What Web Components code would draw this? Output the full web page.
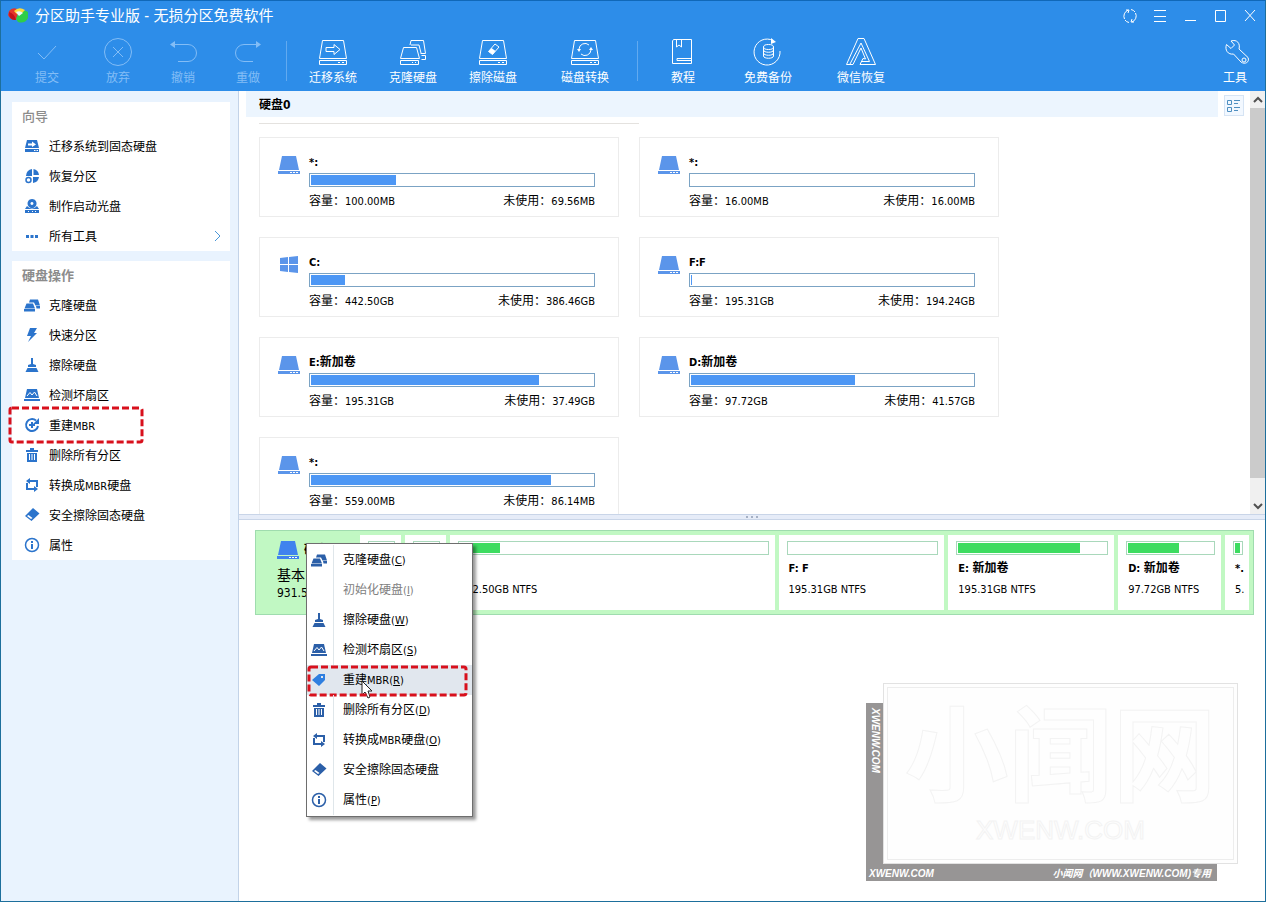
<!DOCTYPE html>
<html lang="zh-CN">
<head>
<meta charset="utf-8">
<title>分区助手专业版</title>
<style>
  html, body { margin: 0; height: 100%; }
  body { font: 12px/16px "DejaVu Sans Condensed", "Noto Sans CJK SC", sans-serif; color: #000; background: #fff; }
</style>
</head>
<body>
<partition-app></partition-app>
<script>
const define = (name, css, html, setup) => {
  const tpl = document.createElement('template');
  tpl.innerHTML = `<style>*{box-sizing:border-box} button{font:inherit;color:inherit;background:none;border:0;padding:0;margin:0;cursor:default}${css}</style>${html}`;
  customElements.define(name, class extends HTMLElement {
    connectedCallback() {
      if (this.shadowRoot) return;
      const root = this.attachShadow({ mode: 'open' });
      root.append(tpl.content.cloneNode(true));
      if (setup) setup.call(this, root);
    }
  });
};

/* Latin runs are set one size smaller than the Chinese text around them. */
const fill = (el, text) => {
  el.textContent = '';
  for (const part of text.split(/([ -~]+|：)/)) {
    if (!part) continue;
    if (/^([ -~]+|：)$/.test(part)) {
      const s = document.createElement('span');
      s.className = part === '：' ? 'colon' : 'latin';
      const m = part.match(/^(.*\()([A-Z])(\))$/);
      if (m) { const u = document.createElement('u'); u.textContent = m[2]; s.append(m[1], u, m[3]); }
      else s.textContent = part;
      el.append(s);
    } else el.append(part);
  }
};
const LATIN = '.latin{font-size:11px} .colon{font-family:"Noto Sans CJK TC",sans-serif}';

const line = 'fill="none" stroke="currentColor"';
const tray = '<path d="M5.5 4.5H26.5L29.5 22.5H2.5ZM2.5 24.5H29.5V28.5H2.5ZM21 26.5h2M25 26.5h2"/>';
const icons = {
  check: [32, `<path ${line} d="M7 17L13 23L25 10"/>`],
  cancel: [32, `<g ${line}><circle cx="16" cy="16" r="13.5"/><path d="M11 11L21 21M21 11L11 21"/></g>`],
  undo: [32, `<path ${line} d="M6 8.5H21a8.5 8.5 0 0 1 0 17H11"/><path fill="currentColor" d="M3 8.5L8 5v7z"/>`],
  redo: [32, `<path ${line} d="M26 8.5H12a8.5 8.5 0 0 0 0 17H21"/><path fill="currentColor" d="M29 8.5L24 5v7z"/>`],
  migrate: [32, `<g ${line}>${tray}<path d="M9 11.5H17V8.5L23 13.5L17 18.5V15.5H9Z"/></g>`],
  clone: [32, `<g ${line}><path d="M6.5 11.5H19.5L22.5 22.5H3.5ZM3.5 24.5H21.5V28.5H3.5ZM15 26.5h1M18 26.5h1M13 9L14 4.5H26.5L28.5 17.5H23.5M24.5 19.5H28.5V23.5H24.5M24 17L22 9H14"/></g>`],
  erase: [32, `<g ${line}>${tray}<path d="M11.5 15.5L18 8L22 11L15.5 18.5Z"/></g><path fill="currentColor" d="M11.5 15.5l3-3.5 4 3-3 3.5z"/>`],
  convert: [32, `<g ${line}>${tray}<path d="M10 13a6 6 0 0 1 10-4M22 14a6 6 0 0 1-10 4"/></g><path fill="currentColor" d="M8 13h4l-2 3zM20 14h4l-2-3z"/>`],
  book: [32, `<g ${line}><path d="M6.5 3.5H24.5V27.5H5.5V5ZM9.5 3.5V11L12 9L14.5 11V3.5M24 22.500H10V24.5H24"/></g>`],
  backup: [32, `<g ${line}><path d="M21 4.5A13 13 0 1 0 28 15"/><ellipse cx="16.5" cy="11" rx="5" ry="2.5"/><path d="M11.5 11V20c0 3 10 3 10 0V11M11.5 14c0 3 10 3 10 0M11.5 17c0 3 10 3 10 0"/></g><path fill="currentColor" d="M19 2l5 4-5 2z"/>`],
  recover: [32, `<g ${line}><path d="M13 2.5H19L30.5 28.5H15L18 22.5L20.5 23L16 12L8 28.5H1.5Z"/><path d="M16 7L24.5 25.5H17M16 7L5 28"/></g>`],
  wrench: [32, `<g ${line}><path d="M7.5 8.5L12 12.5L15.5 9L12 5C18 3 21.5 7.5 20 13L29 21.5C31 26 26 29 22 26L14.5 18C9 19 5.5 14 7.5 8.5Z"/><circle cx="25" cy="24" r="2"/></g>`],
  refresh: [18, `<g ${line}><path d="M3.5 12A6.5 6.5 0 0 1 7 3.2M14.5 6a6.5 6.5 0 0 1-3.5 9M5 3l3 0-1 3M13 15h-3l1-3M10 2.5a6 6 0 0 1 4 2.5M4 13a6 6 0 0 0 4 2.5"/></g>`],
  lines: [18, `<path ${line} d="M3 3.5H15M3 9.5H15M3 14.5H15"/>`],
  min: [18, `<path ${line} d="M4 13.5H15"/>`],
  max: [18, `<path ${line} d="M4.5 3.5H14.5V14.5H4.5Z"/>`],
  close: [18, `<path ${line} d="M4 3L14 14M14 3L4 14"/>`],
  view: [16, `<g ${line}><path d="M1.5 2.5H5.5V6.5H1.5ZM1.5 9.5H5.5V13.5H1.5ZM8 2.5h6M8 5.5h4M8 9.5h6M8 12.5h4"/></g>`],
  chevron: [16, `<path ${line} d="M6 3L11 8L6 13"/>`],
  up: [14, `<path ${line} stroke-width="2" d="M3 9L7 5L11 9"/>`],
  down: [14, `<path ${line} stroke-width="2" d="M3 5L7 9L11 5"/>`],
  sMigrate: [16, `<path fill="currentColor" d="M3 2H13L15 10H1ZM1 11H15V14H1Z"/><path fill="#fff" d="M4 5.5H8V3.5L12 6.5L8 9V7.5H4ZM10 12h1.5v1H10zM12.5 12H14v1h-1.5z"/>`],
  sRecover: [16, `<path fill="currentColor" d="M8 1V8H2A7 7 0 0 1 8 1ZM9.5 1A7 7 0 0 1 15 7H9.5ZM9 9H15A7 7 0 0 1 9 15Z"/><circle cx="4.5" cy="12" r="2.5" fill="none" stroke="currentColor" stroke-width="1.5"/>`],
  sDisc: [16, `<path fill="currentColor" fill-rule="evenodd" d="M8 1a4.500 4.500 0 1 0 .1 0ZM8 4a1.500 1.500 0 1 1-.1 0ZM3 8L1 11H15L13 8Q8 13 3 8ZM1 12H15V15H1Z"/><path fill="#fff" d="M4 13h1v1H4zM8 13h1v1H8zM11 13h1v1h-1z"/>`],
  sDots: [16, `<path fill="currentColor" d="M2 7h3v3H2zM6.5 7h3v3h-3zM11 7h3v3h-3z"/>`],
  sClone: [16, `<path fill="currentColor" d="M2.5 6.5H9L11 11.5H.5ZM0 12H11V14.5H0ZM6 2.500H14L16 8.5H11.5L10 5.500H5ZM12 9H16V11.5H12.5Z"/>`],
  sBolt: [16, `<path fill="currentColor" d="M6 1H13L10 6H13L4 15L7 9H3Z"/>`],
  sBroom: [16, `<path fill="currentColor" d="M7 1H9V7L12 8V10H4V8L7 7ZM3.5 11H12.5L14.5 15H1.5Z"/>`],
  sScan: [16, `<path fill="currentColor" d="M3 2H13L15 11H1ZM0 12H16V14H0Z"/><path fill="none" stroke="#fff" d="M3 9L6 5.5L8 8L10.5 5L13 9"/>`],
  sRebuild: [16, `<path fill="none" stroke="currentColor" stroke-width="2" d="M12 3.5A6 6 0 1 0 14 9"/><path fill="currentColor" d="M15 1V7H9ZM7 5H9V7H11V9H9V11H7V9H5V7H7Z"/>`],
  sTrash: [16, `<path fill="currentColor" fill-rule="evenodd" d="M6 1H10V3H14V5H2V3H6ZM3 6H13V15H3ZM5 7V13H6V7ZM7.5 7V13H8.5V7ZM10 7V13H11V7Z"/>`],
  sSwap: [16, `<path fill="none" stroke="currentColor" stroke-width="2" d="M5 4H13V10M11 12H3V6"/><path fill="currentColor" d="M6 1V7L2 4ZM10 9V15L14 12Z"/>`],
  sEraser: [16, `<path fill="currentColor" fill-rule="evenodd" d="M9 1L15.5 6.5L7.5 14L1 9ZM4.500 8L3 9L7 12L8.500 11Z"/>`],
  sInfo: [16, `<circle cx="8" cy="8" r="6.5" fill="none" stroke="currentColor" stroke-width="1.5"/><path fill="currentColor" d="M7 4h2v2H7zM7 7h2v5H7z"/>`],
  sTag: [16, `<path fill="currentColor" fill-rule="evenodd" d="M1 8L8 2H14V8L8 14ZM10 4V6H12V4Z"/>`],
  disk: [22, `<path fill="currentColor" d="M4 2H18L21 16H1ZM0 17H22V20H0Z"/><path fill="#fff" d="M12 18h2v1h-2zM15 18h2v1h-2zM18 18h2v1h-2z"/>`],
  windows: [22, `<path fill="currentColor" d="M2 4L10 3V10H2ZM11 3L20 2V10H11ZM2 11H10V18L2 17ZM11 11H20V19L11 18Z"/>`],
  logo: [20, `<path fill="#e3342b" d="M1 5Q5 0 11 4L8 14Q2 14 0 9Z"/><path fill="#c1121c" d="M1 6Q7 8 8 14Q1 15 1 6Z"/><path fill="#2fce48" d="M10 8Q16 2 20 6V12Q17 18 10 16L8 13Z"/><path fill="#ffd93a" d="M6 5Q11 0 17 4L12 9Q9 9 6 5Z"/><path fill="#eaf6ff" d="M8 6Q12 4 15 7L11 10Z"/>`]
};
define('ui-icon', ':host{display:inline-flex;flex:none} svg{display:block}', '<svg aria-hidden="true"></svg>', function (root) {
  const [size, body] = icons[this.getAttribute('name')];
  const svg = root.querySelector('svg');
  svg.setAttribute('viewBox', `0 0 ${size} ${size}`);
  svg.setAttribute('width', size);
  svg.setAttribute('height', size);
  svg.innerHTML = body;
});

define('dash-frame', ':host{position:absolute;pointer-events:none} svg{display:block;width:100%;height:100%;overflow:visible}',
  '<svg><rect width="100%" height="100%" rx="2" fill="none" stroke="#d8101c" stroke-width="3" stroke-dasharray="7 3"/></svg>');

define('tool-button', `:host{display:block} button{display:flex;flex-direction:column;align-items:center;gap:2px;width:48px;height:54px;white-space:nowrap;color:#fff}
  :host([short]) button{width:32px} :host([off]) button{color:#83bdf6}`,
  '<button><span class="icon"></span><slot></slot></button>', function (root) {
    root.querySelector('.icon').outerHTML = `<ui-icon name="${this.getAttribute('icon')}"></ui-icon>`;
    root.querySelector('button').disabled = this.hasAttribute('off');
  });

define('app-header', `:host{display:block;background:#2d8de9;color:#fff;height:90px}
  .title{display:flex;align-items:center;height:30px;padding-left:7px;gap:7px;font-size:15px;line-height:20px}
  h1{font:inherit;margin:0;flex:1} .win{display:flex} .win button{width:30px;height:30px;display:grid;place-items:center}
  .tools{display:flex;padding:5px 14px 0 30px} .group{display:flex}
  .edit{gap:33px} .edit :first-child{margin-right:6px} .disk{gap:32px} .disk :last-child{margin-left:12px} .more{gap:45px}
  hr{width:1px;height:40px;border:0;background:#62aaf0;margin:5px 22px 0 22px} hr.b{margin:5px 29px 0 28px} .end{margin-left:auto}`,
  `<div class="title"><ui-icon name="logo"></ui-icon><h1>分区助手专业版 - 无损分区免费软件</h1>
   <div class="win"><button aria-label="刷新"><ui-icon name="refresh"></ui-icon></button><button aria-label="菜单"><ui-icon name="lines"></ui-icon></button><button aria-label="最小化"><ui-icon name="min"></ui-icon></button><button aria-label="最大化"><ui-icon name="max"></ui-icon></button><button aria-label="关闭"><ui-icon name="close"></ui-icon></button></div></div>
   <div class="tools">
    <div class="group edit"><tool-button short off icon="check">提交</tool-button><tool-button short off icon="cancel">放弃</tool-button><tool-button short off icon="undo">撤销</tool-button><tool-button short off icon="redo">重做</tool-button></div><hr>
    <div class="group disk"><tool-button icon="migrate">迁移系统</tool-button><tool-button icon="clone">克隆硬盘</tool-button><tool-button icon="erase">擦除磁盘</tool-button><tool-button icon="convert">磁盘转换</tool-button></div><hr class="b">
    <div class="group more"><tool-button short icon="book">教程</tool-button><tool-button icon="backup">免费备份</tool-button><tool-button icon="recover">微信恢复</tool-button></div>
    <tool-button class="end" short icon="wrench">工具</tool-button></div>`);

define('nav-item', `:host{display:block;position:relative} button{display:flex;align-items:center;gap:9px;width:100%;height:30px;padding:0 5px 0 12px;text-align:left}
  .icon{color:#2b74cc;display:flex} .label{flex:1;padding-top:2px} .more{color:#4a97d8;display:flex} dash-frame{left:-2px;right:88px;top:-2px;bottom:-2px} ${LATIN}`,
  '<button><span class="icon"></span><span class="label"></span></button>', function (root) {
    root.querySelector('.icon').innerHTML = `<ui-icon name="${this.getAttribute('icon')}"></ui-icon>`;
    fill(root.querySelector('.label'), this.getAttribute('label'));
    if (this.hasAttribute('more')) root.querySelector('button').insertAdjacentHTML('beforeend', '<span class="more"><ui-icon name="chevron"></ui-icon></span>');
    if (this.hasAttribute('marked')) root.append(document.createElement('dash-frame'));
  });
define('nav-card', ':host{display:block;background:#fff} h2{margin:0;height:29px;padding-left:10px;font-size:13px;line-height:30px;font-weight:700;color:#8c8c8c} :host([light]) h2{font-weight:500}',
  '<h2></h2><slot></slot>', function (root) { root.querySelector('h2').textContent = this.getAttribute('heading'); });
define('side-bar', ':host{display:flex;flex-direction:column;gap:10px;width:238px;flex:none;padding:11px 8px 10px 11px;background:#e9f3fe;border-right:1px solid #c3d3e8}',
  `<nav-card light heading="向导"><nav-item icon="sMigrate" label="迁移系统到固态硬盘"></nav-item><nav-item icon="sRecover" label="恢复分区"></nav-item><nav-item icon="sDisc" label="制作启动光盘"></nav-item><nav-item more icon="sDots" label="所有工具"></nav-item></nav-card>
   <nav-card heading="硬盘操作"><nav-item icon="sClone" label="克隆硬盘"></nav-item><nav-item icon="sBolt" label="快速分区"></nav-item><nav-item icon="sBroom" label="擦除硬盘"></nav-item><nav-item icon="sScan" label="检测坏扇区"></nav-item><nav-item marked icon="sRebuild" label="重建MBR"></nav-item><nav-item icon="sTrash" label="删除所有分区"></nav-item><nav-item icon="sSwap" label="转换成MBR硬盘"></nav-item><nav-item icon="sEraser" label="安全擦除固态硬盘"></nav-item><nav-item icon="sInfo" label="属性"></nav-item></nav-card>`);

define('usage-bar', `:host{display:block;height:14px;border:1px solid #7ba3c4;padding:1px} i{display:block;height:100%;background:#4d97f5;width:var(--used,0%)}
  :host([green]){border-color:#a9d8bb} :host([green]) i{background:#3ddc60}`, '<i></i>');

define('volume-card', `:host{display:flex;gap:9px;height:80px;border:1px solid #ececec;padding:16px 23px 0 18px}
  .icon{color:#5b95ea;display:flex;align-items:start} .main{flex:1;min-width:0} .name{font-weight:700;height:19px} .row{display:flex;justify-content:space-between;margin-top:5px} ${LATIN}`,
  '<span class="icon"></span><div class="main"><div class="name"></div><usage-bar></usage-bar><div class="row"><span class="cap"></span><span class="free"></span></div></div>', function (root) {
    const a = n => this.getAttribute(n);
    root.querySelector('.icon').innerHTML = `<ui-icon name="${a('icon') || 'disk'}"></ui-icon>`;
    fill(root.querySelector('.name'), a('name'));
    fill(root.querySelector('.cap'), '容量：' + a('cap'));
    fill(root.querySelector('.free'), '未使用：' + a('free'));
    root.querySelector('usage-bar').style.setProperty('--used', a('used') + '%');
  });

define('scroll-rail', `:host{display:flex;flex-direction:column;width:15px;flex:none;background:#f0f0f0;color:#505050} button{height:17px;display:grid;place-items:center}
  .track{flex:1;display:flex} .thumb{width:100%;height:95%;background:#cbcbcb}`,
  '<button aria-label="向上"><ui-icon name="up"></ui-icon></button><div class="track"><div class="thumb"></div></div><button aria-label="向下"><ui-icon name="down"></ui-icon></button>');

define('volume-pane', `:host{display:flex;min-height:0;overflow:hidden} .view{flex:1;min-width:0;padding-left:7px}
  header{display:flex;gap:6px;height:32px;align-items:flex-start;padding-right:6px} h2{flex:1;margin:0;height:26px;padding-left:13px;background:#ecf5fe;font-size:12px;line-height:28px;font-weight:700}
  header button{margin-top:4px;width:20px;height:21px;border:1px solid #d6e4f4;background:#f2f8ff;color:#4f8fc0;display:grid;place-items:center}
  .rule{width:380px;height:1px;margin:0 0 13px 13px;background:#e4e2df} .grid{display:grid;grid-template-columns:repeat(auto-fill,360px);gap:20px;padding-left:13px}`,
  `<div class="view"><header><h2>硬盘0</h2><button aria-label="视图"><ui-icon name="view"></ui-icon></button></header><div class="rule"></div>
   <div class="grid">
    <volume-card name="*:" cap="100.00MB" free="69.56MB" used="30"></volume-card><volume-card name="*:" cap="16.00MB" free="16.00MB" used="0"></volume-card>
    <volume-card icon="windows" name="C:" cap="442.50GB" free="386.46GB" used="12"></volume-card><volume-card name="F:F" cap="195.31GB" free="194.24GB" used="0.4"></volume-card>
    <volume-card name="E:新加卷" cap="195.31GB" free="37.49GB" used="81"></volume-card><volume-card name="D:新加卷" cap="97.72GB" free="41.57GB" used="58"></volume-card>
    <volume-card name="*:" cap="559.00MB" free="86.14MB" used="85"></volume-card></div></div><scroll-rail></scroll-rail>`);

define('disk-tile', `:host{display:block;box-sizing:border-box;min-width:0;overflow:hidden;background:#fff;padding:6px 6px 0 8px;white-space:nowrap} p{margin:5px 0 0 2px;height:16px} ${LATIN}
  .name{font-weight:700}`,
  '<usage-bar green></usage-bar><p class="name"></p><p class="size"></p>', function (root) {
    const share = this.getAttribute('share');
    this.style.flex = `${share} 1 ${share}px`;
    fill(root.querySelector('.name'), this.getAttribute('name') || '');
    fill(root.querySelector('.size'), this.getAttribute('size') || '');
    root.querySelector('usage-bar').style.setProperty('--used', (this.getAttribute('used') || 0) + '%');
  });
define('disk-map', `:host{display:flex;gap:4px;height:85px;margin:10px 11px 0 16px;padding:4px;border:1px solid #9fdcae;background:#c1f8c3;white-space:nowrap}
  .info{width:96px;flex:none;padding:4px 0 0 17px} .head{display:flex;gap:5px;align-items:center;height:22px;color:#3f83ee} .head b{color:#000} .kind{font-size:14px;line-height:20px;margin-top:4px}`,
  `<div class="info"><div class="head"><ui-icon name="disk"></ui-icon><b>硬盘0</b></div><div class="kind">基本</div><div>931.51GB</div></div>
   <disk-tile share="41"></disk-tile><disk-tile share="41"></disk-tile><disk-tile share="325" name="C:" size="442.50GB NTFS" used="13"></disk-tile>
   <disk-tile share="166" name="F: F" size="195.31GB NTFS"></disk-tile><disk-tile share="166" name="E: 新加卷" size="195.31GB NTFS" used="82"></disk-tile>
   <disk-tile share="103" name="D: 新加卷" size="97.72GB NTFS" used="60"></disk-tile><disk-tile share="24" name="*." size="5." used="85"></disk-tile>`);

define('site-stamp', `:host{position:absolute;right:27px;bottom:20px;width:372px;height:198px;color:#fff;font:italic 700 10px/14px "Liberation Sans","Noto Sans CJK SC",sans-serif}
  .back{position:absolute;left:0;right:21px;top:20px;bottom:0;background:#979595;display:flex;justify-content:space-between;align-items:flex-end;padding:0 6px 0 3px}
  .side{position:absolute;left:2px;top:5px;writing-mode:vertical-rl}
  .card{position:absolute;left:17px;right:0;top:0;bottom:17px;background:#fefefe;border:1px solid #e2e2e2;padding:3px}
  .inner{height:100%;border:1px solid #ededed;display:flex;flex-direction:column;align-items:center;justify-content:center;font-style:normal;color:#fefefe;-webkit-text-stroke:1px #f3f3f3}
  .big{font-size:104px;line-height:112px;font-weight:700} .url{font-size:26px;line-height:32px;font-weight:400}`,
  `<div class="back"><span class="side">XWENW.COM</span><span>XWENW.COM</span><span>小闻网（WWW.XWENW.COM)专用</span></div>
   <div class="card"><div class="inner"><div class="big">小闻网</div><div class="url">XWENW.COM</div></div></div>`);

define('menu-item', `:host{display:block;position:relative} button{display:flex;align-items:center;width:100%;height:30px;text-align:left}
  .icon{width:27px;height:30px;flex:none;padding-left:4px;display:flex;align-items:center;color:#2b5fa8;border-right:1px solid #dfe6ea} .label{padding-left:9px}
  :host([off]) button{color:#808080} :host([active]) button{background:#e1e7ee} :host([active]) .icon{color:#2f7fe0;border-color:transparent}
  .cursor{position:absolute;left:54px;top:15px} dash-frame{left:2px;right:6px;top:2px;bottom:0} ${LATIN}`,
  '<button role="menuitem"><span class="icon"></span><span class="label"></span></button>', function (root) {
    if (this.getAttribute('icon')) root.querySelector('.icon').innerHTML = `<ui-icon name="${this.getAttribute('icon')}"></ui-icon>`;
    fill(root.querySelector('.label'), this.getAttribute('label'));
    root.querySelector('button').disabled = this.hasAttribute('off');
    if (this.hasAttribute('active')) {
      root.append(document.createElement('dash-frame'));
      root.querySelector('button').insertAdjacentHTML('afterend', '<svg class="cursor" width="13" height="20" viewBox="0 0 13 20"><path fill="#fff" stroke="#222" d="M1 1V15L4 12L7 18L9 17L7 11H11Z"/></svg>');
    }
  });
define('context-menu', ':host{display:block;box-sizing:border-box;position:absolute;left:305px;top:542px;width:167px;padding:1px 0;background:#fff;border:1px solid #6e6e6e;box-shadow:3px 3px 3px rgba(0,0,0,.4)}',
  `<div role="menu"><menu-item icon="sClone" label="克隆硬盘(C)"></menu-item><menu-item off label="初始化硬盘(I)"></menu-item><menu-item icon="sBroom" label="擦除硬盘(W)"></menu-item><menu-item icon="sScan" label="检测坏扇区(S)"></menu-item><menu-item active icon="sTag" label="重建MBR(R)"></menu-item><menu-item icon="sTrash" label="删除所有分区(D)"></menu-item><menu-item icon="sSwap" label="转换成MBR硬盘(O)"></menu-item><menu-item icon="sEraser" label="安全擦除固态硬盘"></menu-item><menu-item icon="sInfo" label="属性(P)"></menu-item></div>`);

define('partition-app', `:host{display:flex;flex-direction:column;height:100vh;min-height:840px;box-sizing:border-box;position:relative;border:1px solid #1d6f9c;border-top-color:#1068b8;background:#fff}
  .body{flex:1;display:flex;min-height:0} main{flex:1;min-width:0;display:flex;flex-direction:column} volume-pane{flex:10 0 0} .low{flex:9 0 0;position:relative}
  .split{height:6px;background:#e6ecf8;border:solid #c9d5e8;border-width:1px 0;display:flex;gap:3px;justify-content:center;align-items:center} .split i{width:2px;height:2px;background:#a5b0c4}`,
  `<app-header></app-header><div class="body"><side-bar></side-bar><main><volume-pane></volume-pane><div class="split"><i></i><i></i><i></i></div><div class="low"><disk-map></disk-map><site-stamp></site-stamp></div></main></div><context-menu></context-menu>`);
</script>
</body>
</html>
